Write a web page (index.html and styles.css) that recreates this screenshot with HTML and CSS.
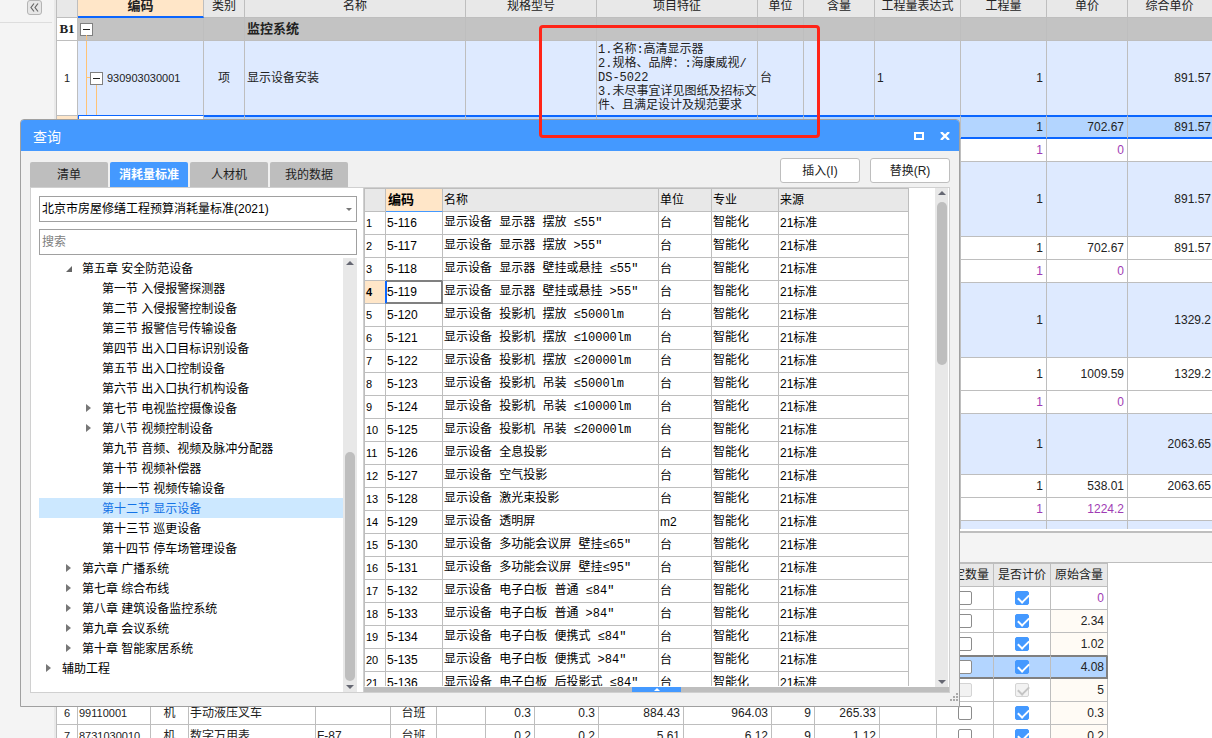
FILE: index.html
```html
<!DOCTYPE html>
<html lang="zh-CN">
<head>
<meta charset="utf-8">
<title>查询</title>
<link rel="stylesheet" href="styles.css">
</head>
<body>
<div class="app">
  <aside class="side">
    <button class="collapse" aria-label="收起">
      <svg width="9" height="9" viewBox="0 0 9 9"><path d="M4 .5 1 4.5l3 4M8 .5 5 4.5l3 4" fill="none" stroke="#666" stroke-width="1.2"/></svg>
    </button>
  </aside>
  <main class="main">
    <section class="upper">
      <table class="grid bill">
        <colgroup><col class="w21"><col class="w126"><col class="w41"><col class="w221"><col class="w131"><col class="w161"><col class="w46"><col class="w71"><col class="w86"><col class="w86"><col class="w81"><col></colgroup>
        <thead>
          <tr><th></th><th class="active">编码</th><th>类别</th><th>名称</th><th>规格型号</th><th>项目特征</th><th>单位</th><th>含量</th><th>工程量表达式</th><th>工程量</th><th>单价</th><th>综合单价</th></tr>
        </thead>
        <tbody>
          <tr class="group"><td class="rn">B1</td><td class="tree-cell"><button class="toggle" aria-label="折叠"></button><i class="stem"></i></td><td></td><td class="title">监控系统</td><td></td><td></td><td></td><td></td><td></td><td></td><td></td><td></td></tr>
          <tr class="item h75 above"><td class="rn">1</td><td class="tree-cell"><i class="line-a"></i><i class="line-b"></i><i class="branch"></i><span class="node"><button class="toggle" aria-label="折叠"></button><span class="code">930903030001</span></span></td><td class="mid">项</td><td>显示设备安装</td><td></td><td class="mono">1.名称:高清显示器<br>2.规格、品牌：:海康威视/<br>DS-5022<br>3.未尽事宜详见图纸及招标文<br>件、且满足设计及规范要求</td><td>台</td><td></td><td>1</td><td class="num">1</td><td></td><td class="num">891.57</td></tr>
          <tr class="sel"><td class="rn"></td><td class="edit"></td><td></td><td></td><td></td><td></td><td></td><td></td><td></td><td class="num">1</td><td class="num">702.67</td><td class="num">891.57</td></tr>
          <tr class="sub"><td></td><td></td><td></td><td></td><td></td><td></td><td></td><td></td><td></td><td class="num">1</td><td class="num">0</td><td></td></tr>
          <tr class="item h75"><td></td><td></td><td></td><td></td><td></td><td></td><td></td><td></td><td></td><td class="num">1</td><td></td><td class="num">891.57</td></tr>
          <tr><td></td><td></td><td></td><td></td><td></td><td></td><td></td><td></td><td></td><td class="num">1</td><td class="num">702.67</td><td class="num">891.57</td></tr>
          <tr class="sub"><td></td><td></td><td></td><td></td><td></td><td></td><td></td><td></td><td></td><td class="num">1</td><td class="num">0</td><td></td></tr>
          <tr class="item h75"><td></td><td></td><td></td><td></td><td></td><td></td><td></td><td></td><td></td><td class="num">1</td><td></td><td class="num">1329.2</td></tr>
          <tr class="h33"><td></td><td></td><td></td><td></td><td></td><td></td><td></td><td></td><td></td><td class="num">1</td><td class="num">1009.59</td><td class="num">1329.2</td></tr>
          <tr class="sub"><td></td><td></td><td></td><td></td><td></td><td></td><td></td><td></td><td></td><td class="num">1</td><td class="num">0</td><td></td></tr>
          <tr class="item h61"><td></td><td></td><td></td><td></td><td></td><td></td><td></td><td></td><td></td><td class="num">1</td><td></td><td class="num">2063.65</td></tr>
          <tr><td></td><td></td><td></td><td></td><td></td><td></td><td></td><td></td><td></td><td class="num">1</td><td class="num">538.01</td><td class="num">2063.65</td></tr>
          <tr class="sub"><td></td><td></td><td></td><td></td><td></td><td></td><td></td><td></td><td></td><td class="num">1</td><td class="num">1224.2</td><td></td></tr>
          <tr class="item h8"><td></td><td></td><td></td><td></td><td></td><td></td><td></td><td></td><td></td><td></td><td></td><td></td></tr>
        </tbody>
      </table>
    </section>
    <div class="splitter"></div>
    <section class="lower">
      <table class="grid res">
        <colgroup><col class="w21"><col class="w73"><col class="w38"><col class="w127"><col class="w75"><col class="w46"><col class="w49"><col class="w49"><col class="w64"><col class="w85"><col class="w88"><col class="w43"><col class="w65"><col class="w57"><col class="w57"><col class="w57"><col class="w57"></colgroup>
        <thead>
          <tr><th></th><th></th><th></th><th></th><th></th><th></th><th></th><th></th><th></th><th></th><th></th><th></th><th></th><th></th><th>锁定数量</th><th>是否计价</th><th>原始含量</th></tr>
        </thead>
        <tbody>
          <tr class="first"><td colspan="14"></td><td class="mid"><input type="checkbox" aria-label="锁定数量"></td><td class="mid"><input type="checkbox" checked aria-label="是否计价"></td><td class="num purple">0</td></tr>
          <tr><td colspan="14"></td><td class="mid"><input type="checkbox" aria-label="锁定数量"></td><td class="mid"><input type="checkbox" checked aria-label="是否计价"></td><td class="num">2.34</td></tr>
          <tr class="before-cur"><td colspan="14"></td><td class="mid"><input type="checkbox" aria-label="锁定数量"></td><td class="mid"><input type="checkbox" checked aria-label="是否计价"></td><td class="num">1.02</td></tr>
          <tr class="cur"><td colspan="14"></td><td class="mid"><input type="checkbox" aria-label="锁定数量"></td><td class="mid"><input type="checkbox" checked aria-label="是否计价"></td><td class="num">4.08</td></tr>
          <tr><td colspan="14"></td><td class="mid"><input type="checkbox" disabled aria-label="锁定数量"></td><td class="mid"><input type="checkbox" checked disabled aria-label="是否计价"></td><td class="num">5</td></tr>
          <tr><td class="rn">6</td><td class="code">99110001</td><td class="mid">机</td><td>手动液压叉车</td><td></td><td class="mid">台班</td><td></td><td class="num">0.3</td><td class="num">0.3</td><td class="num">884.43</td><td class="num">964.03</td><td class="num">9</td><td class="num">265.33</td><td></td><td class="mid"><input type="checkbox" aria-label="锁定数量"></td><td class="mid"><input type="checkbox" checked aria-label="是否计价"></td><td class="num">0.3</td></tr>
          <tr><td class="rn">7</td><td class="code">8731030010</td><td class="mid">机</td><td>数字万用表</td><td>F-87</td><td class="mid">台班</td><td></td><td class="num">0.2</td><td class="num">0.2</td><td class="num">5.61</td><td class="num">6.12</td><td class="num">9</td><td class="num">1.12</td><td></td><td class="mid"><input type="checkbox" aria-label="锁定数量"></td><td class="mid"><input type="checkbox" checked aria-label="是否计价"></td><td class="num">0.2</td></tr>
        </tbody>
      </table>
    </section>
  </main>

  <div class="dialog" role="dialog" aria-labelledby="dlg-title">
    <header class="titlebar">
      <h1 id="dlg-title">查询</h1>
      <button aria-label="最大化"><svg width="10" height="8" viewBox="0 0 10 8"><path d="M1 1h8v6H1z" fill="none" stroke="#fff" stroke-width="2"/></svg></button>
      <button aria-label="关闭"><svg width="10" height="8" viewBox="0 0 10 8"><path d="M1 0l8 8M9 0 1 8" fill="none" stroke="#fff" stroke-width="2.4"/></svg></button>
    </header>
    <div class="toolbar">
      <nav class="tabs">
        <button>清单</button><button class="on">消耗量标准</button><button>人材机</button><button>我的数据</button>
      </nav>
      <div class="actions"><button>插入(I)</button><button>替换(R)</button></div>
    </div>
    <div class="panes">
      <div class="left">
        <div class="select"><select aria-label="标准"><option>北京市房屋修缮工程预算消耗量标准(2021)</option></select></div>
        <input class="search" type="text" placeholder="搜索" aria-label="搜索">
        <div class="tree-wrap">
          <ul class="tree">
            <li class="l2 open">第五章 安全防范设备</li>
            <li class="l3">第一节 入侵报警探测器</li>
            <li class="l3">第二节 入侵报警控制设备</li>
            <li class="l3">第三节 报警信号传输设备</li>
            <li class="l3">第四节 出入口目标识别设备</li>
            <li class="l3">第五节 出入口控制设备</li>
            <li class="l3">第六节 出入口执行机构设备</li>
            <li class="l3 shut">第七节 电视监控摄像设备</li>
            <li class="l3 shut">第八节 视频控制设备</li>
            <li class="l3">第九节 音频、视频及脉冲分配器</li>
            <li class="l3">第十节 视频补偿器</li>
            <li class="l3">第十一节 视频传输设备</li>
            <li class="l3 picked">第十二节 显示设备</li>
            <li class="l3">第十三节 巡更设备</li>
            <li class="l3">第十四节 停车场管理设备</li>
            <li class="l2 shut">第六章 广播系统</li>
            <li class="l2 shut">第七章 综合布线</li>
            <li class="l2 shut">第八章 建筑设备监控系统</li>
            <li class="l2 shut">第九章 会议系统</li>
            <li class="l2 shut">第十章 智能家居系统</li>
            <li class="l1 shut">辅助工程</li>
          </ul>
          <div class="scroll tree-scroll"><i class="up"></i><i class="thumb"></i><i class="down"></i></div>
        </div>
      </div>
      <div class="right">
        <div class="view">
          <div class="clip">
            <table class="grid quota">
              <colgroup><col class="w21"><col class="w57"><col class="w216"><col class="w53"><col class="w67"><col class="w130"></colgroup>
              <thead><tr><th></th><th class="active">编码</th><th>名称</th><th>单位</th><th>专业</th><th>来源</th></tr></thead>
              <tbody>
                <tr><td>1</td><td>5-116</td><td>显示设备 显示器 摆放 ≤55″</td><td>台</td><td>智能化</td><td>21标准</td></tr>
                <tr><td>2</td><td>5-117</td><td>显示设备 显示器 摆放 &gt;55″</td><td>台</td><td>智能化</td><td>21标准</td></tr>
                <tr class="before-cursor"><td>3</td><td>5-118</td><td>显示设备 显示器 壁挂或悬挂 ≤55″</td><td>台</td><td>智能化</td><td>21标准</td></tr>
                <tr class="cursor"><td>4</td><td>5-119</td><td>显示设备 显示器 壁挂或悬挂 &gt;55″</td><td>台</td><td>智能化</td><td>21标准</td></tr>
                <tr><td>5</td><td>5-120</td><td>显示设备 投影机 摆放 ≤5000lm</td><td>台</td><td>智能化</td><td>21标准</td></tr>
                <tr><td>6</td><td>5-121</td><td>显示设备 投影机 摆放 ≤10000lm</td><td>台</td><td>智能化</td><td>21标准</td></tr>
                <tr><td>7</td><td>5-122</td><td>显示设备 投影机 摆放 ≤20000lm</td><td>台</td><td>智能化</td><td>21标准</td></tr>
                <tr><td>8</td><td>5-123</td><td>显示设备 投影机 吊装 ≤5000lm</td><td>台</td><td>智能化</td><td>21标准</td></tr>
                <tr><td>9</td><td>5-124</td><td>显示设备 投影机 吊装 ≤10000lm</td><td>台</td><td>智能化</td><td>21标准</td></tr>
                <tr><td>10</td><td>5-125</td><td>显示设备 投影机 吊装 ≤20000lm</td><td>台</td><td>智能化</td><td>21标准</td></tr>
                <tr><td>11</td><td>5-126</td><td>显示设备 全息投影</td><td>台</td><td>智能化</td><td>21标准</td></tr>
                <tr><td>12</td><td>5-127</td><td>显示设备 空气投影</td><td>台</td><td>智能化</td><td>21标准</td></tr>
                <tr><td>13</td><td>5-128</td><td>显示设备 激光束投影</td><td>台</td><td>智能化</td><td>21标准</td></tr>
                <tr><td>14</td><td>5-129</td><td>显示设备 透明屏</td><td>m2</td><td>智能化</td><td>21标准</td></tr>
                <tr><td>15</td><td>5-130</td><td>显示设备 多功能会议屏 壁挂≤65″</td><td>台</td><td>智能化</td><td>21标准</td></tr>
                <tr><td>16</td><td>5-131</td><td>显示设备 多功能会议屏 壁挂≤95″</td><td>台</td><td>智能化</td><td>21标准</td></tr>
                <tr><td>17</td><td>5-132</td><td>显示设备 电子白板 普通 ≤84″</td><td>台</td><td>智能化</td><td>21标准</td></tr>
                <tr><td>18</td><td>5-133</td><td>显示设备 电子白板 普通 &gt;84″</td><td>台</td><td>智能化</td><td>21标准</td></tr>
                <tr><td>19</td><td>5-134</td><td>显示设备 电子白板 便携式 ≤84″</td><td>台</td><td>智能化</td><td>21标准</td></tr>
                <tr><td>20</td><td>5-135</td><td>显示设备 电子白板 便携式 &gt;84″</td><td>台</td><td>智能化</td><td>21标准</td></tr>
                <tr><td>21</td><td>5-136</td><td>显示设备 电子白板 后投影式 ≤84″</td><td>台</td><td>智能化</td><td>21标准</td></tr>
              </tbody>
            </table>
          </div>
          <div class="scroll grid-scroll"><i class="up"></i><i class="thumb"></i><i class="down"></i></div>
        </div>
        <div class="drawer"><button aria-label="展开"><i></i></button></div>
      </div>
    </div>
    <footer class="status">
      <svg width="10" height="10" viewBox="0 0 10 10" fill="#aaa"><path d="M7 0h2v2H7zM4 3h2v2H4zM7 3h2v2H7zM1 6h2v2H1zM4 6h2v2H4zM7 6h2v2H7z"/></svg>
    </footer>
  </div>
  <div class="callout"></div>
</div>
</body>
</html>
```
FILE: styles.css
```css
* { box-sizing: border-box; }
html, body { height: 100%; }
body {
  margin: 0;
  overflow: hidden;
  font: 12px/14px "Liberation Sans", "Noto Sans CJK SC", sans-serif;
  color: #222;
  background: #fff;
}
button, input, select { font: inherit; color: inherit; margin: 0; padding: 0; }
i { display: block; }

.app { position: relative; display: flex; height: 100%; overflow: hidden; }

/* left rail */
.side {
  flex: none;
  width: 56px;
  background: #f4f4f4;
  border-right: 2px solid #e9e9e9;
}
.collapse {
  display: flex;
  align-items: center;
  justify-content: center;
  width: 15px;
  height: 15px;
  margin: 0 0 7px 27px;
  background: #e6e6e6;
  border: 1px solid #b4b4b4;
  border-radius: 3px;
}
.side::after { content: ""; display: block; width: 52px; border-top: 1px solid #ddd; }

.main { flex: 1; min-width: 0; display: flex; flex-direction: column; border-left: 1px solid #bebebe; }

/* data grids */
.grid { table-layout: fixed; border-collapse: separate; border-spacing: 0; }
.grid th, .grid td {
  height: 23px;
  padding: 0 3px 0 1px;
  border-right: 1px solid #bebebe;
  border-bottom: 1px solid #bebebe;
  overflow: hidden;
  white-space: nowrap;
  text-align: left;
}
.grid th { background: #e8e8e8; font-weight: normal; text-align: center; padding: 0; }
.grid th.active { background: #ffe6c8; font-size: 13px; font-weight: bold; }
.grid .num { text-align: right; }
.grid .mid { text-align: center; padding: 0; }
.grid .rn { text-align: center; padding: 0; font-size: 11px; }
.grid .code { font-size: 11px; }
.grid .mono { font-family: "Liberation Mono", "Noto Sans CJK SC", monospace; padding: 0 0 0 1px; }
.w21 { width: 21px; } .w38 { width: 38px; } .w41 { width: 41px; } .w43 { width: 43px; }
.w46 { width: 46px; } .w49 { width: 49px; } .w53 { width: 53px; } .w57 { width: 57px; }
.w64 { width: 64px; } .w65 { width: 65px; } .w67 { width: 67px; } .w71 { width: 71px; }
.w73 { width: 73px; } .w75 { width: 75px; } .w81 { width: 81px; } .w85 { width: 85px; }
.w86 { width: 86px; } .w88 { width: 88px; } .w126 { width: 126px; } .w127 { width: 127px; }
.w130 { width: 130px; } .w131 { width: 131px; } .w161 { width: 161px; }
.w216 { width: 216px; } .w221 { width: 221px; }

.upper { flex: none; overflow: hidden; padding-bottom: 2px; }
.bill { width: 100%; margin-top: -5px; }
.bill td { padding-left: 2px; }
.bill th.active { border-bottom: 2px solid #0b66ff; }
.bill th:last-child, .bill td:last-child { border-right: 0; padding-right: 1px; }
.bill .item td { background: #deeaff; }
.bill .item td:first-child { background: #fff; }
.bill .h75 td { height: 75px; }
.bill .h61 td { height: 61px; }
.bill .h33 td { height: 33px; }
.bill .h8 td { height: 8px; border-bottom: 0; }
.bill .sub td { color: #a03cb4; }
.bill .group td { background: #c3c3c3; }
.bill .group .rn { background: #fff; font: bold 13px/14px "Liberation Serif", serif; }
.bill .group .title { font-size: 13px; font-weight: bold; }
.bill .above td:not(:first-child) { border-bottom-color: #0b66ff; }
.bill .sel td { background: #b3d5ff; border-bottom-color: #0b66ff; box-shadow: inset 0 1px #0b66ff, inset 0 -1px #0b66ff; }
.bill .sel .rn { background: #ffe6c8; box-shadow: none; }
.bill .sel .edit { background: #fff; box-shadow: inset 1px 0 #0b66ff; }

.bill .tree-cell { position: relative; overflow: visible; }
.toggle { display: block; position: relative; width: 13px; height: 13px; background: #fff; border: 1px solid #808080; }
.toggle::after { content: ""; position: absolute; left: 2px; right: 2px; top: 5px; height: 1px; background: #222; }
.node { display: flex; align-items: center; gap: 4px; padding-left: 10px; }
.stem, .line-a, .line-b { position: absolute; width: 1px; background: #ffc376; }
.stem { left: 8px; top: 17px; bottom: 0; }
.line-a { left: 8px; top: 0; bottom: 0; }
.line-b { left: 18px; top: 43px; bottom: 0; }
.branch { position: absolute; left: 8px; top: 36px; width: 4px; height: 1px; background: #ffc376; }

.splitter { flex: none; height: 32px; background: #f4f4f4; border-top: 2px solid #bebebe; border-bottom: 1px solid #bebebe; }

.lower { flex: 1; min-height: 0; overflow: hidden; }
.res { width: 1051px; }
.res th { border-top: 1px solid #bebebe; height: 24px; }
.res tbody td:last-child { background: #fffbf5; }
.res tbody .first td:last-child { background: #fff; }
.res .purple { color: #a03cb4; }
.res .before-cur td { border-bottom-color: #808080; }
.res tbody .cur td, .res tbody .cur td:last-child { background: #b3d5ff; border-bottom-color: #808080; box-shadow: inset 0 1px #808080, inset 0 -1px #808080; }
.res tbody .cur td:last-child { border-right-color: #808080; box-shadow: inset 0 1px #808080, inset -1px -1px #808080; }
input[type="checkbox"] {
  appearance: none;
  display: block;
  position: relative;
  width: 14px;
  height: 14px;
  margin: 0 auto;
  background: #fff;
  border: 1px solid #8c8c8c;
  border-radius: 2px;
}
input[type="checkbox"]:checked { background: #4499ff; border-color: #4499ff; }
input[type="checkbox"]:checked::after {
  content: "";
  position: absolute;
  left: 4px;
  top: 0;
  width: 5px;
  height: 9px;
  border: solid #fff;
  border-width: 0 2px 2px 0;
  transform: rotate(45deg);
}
input[type="checkbox"]:disabled { background: #f2f2f2; border-color: #d4d4d4; }
input[type="checkbox"]:disabled::after { border-color: #c4c4c4; }

/* floating window */
.dialog {
  position: absolute;
  left: 20px;
  top: 119px;
  width: 940px;
  display: flex;
  flex-direction: column;
  background: #f1f1f1;
  border: 1px solid #a0a0a0;
  border-radius: 4px 4px 0 0;
}
.titlebar {
  display: flex;
  align-items: center;
  gap: 10px;
  height: 31px;
  padding: 0 6px 0 12px;
  background: #4499ff;
  border-radius: 3px 3px 0 0;
  color: #fff;
}
.titlebar h1 { flex: 1; margin: 0; padding-top: 3px; font-size: 14px; line-height: 20px; font-weight: normal; }
.titlebar button { display: flex; justify-content: center; width: 16px; background: none; border: 0; }

.toolbar { display: flex; justify-content: space-between; align-items: flex-end; padding: 7px 9px 0; }
.tabs { display: flex; gap: 2px; }
.tabs button { width: 78px; height: 25px; background: #bebebe; border: 0; border-radius: 2px 2px 0 0; }
.tabs .on { background: #4499ff; color: #fff; font-weight: bold; }
.actions { display: flex; gap: 10px; padding-bottom: 4px; }
.actions button { width: 80px; height: 25px; background: #fff; border: 1px solid #bebebe; border-radius: 3px; }

.panes { display: flex; margin: 0 9px; border: 1px solid #d0d0d0; background: #fff; color: #000; }
.left { flex: none; width: 333px; display: flex; flex-direction: column; padding: 8px 6px 0 8px; border-right: 1px solid #d0d0d0; }
.select { position: relative; margin-bottom: 7px; }
.select::after { content: ""; position: absolute; right: 5px; top: 12px; border: solid transparent; border-width: 3px 3px 0; border-top-color: #777; }
.select select, .search { display: block; width: 100%; height: 26px; padding: 0 2px; background: #fff; border: 1px solid #a0a0a0; border-radius: 0; }
.select select { appearance: none; }
.search { margin-bottom: 3px; }
.search::placeholder { color: #808080; opacity: 1; }
.tree-wrap { display: flex; }
.tree { flex: 1; margin: 0; padding: 0 0 14px; list-style: none; }
.tree li { position: relative; height: 20px; line-height: 22px; }
.tree .l1 { padding-left: 23px; --arrow: 7px; }
.tree .l2 { padding-left: 43px; --arrow: 27px; }
.tree .l3 { padding-left: 63px; --arrow: 47px; }
.tree .picked { background: #cce8ff; color: #1473e6; }
.tree .shut::before, .tree .open::before { content: ""; position: absolute; left: var(--arrow); border: solid transparent; }
.tree .shut::before { top: 6px; border-width: 4px 0 4px 5px; border-left-color: #777; }
.tree .open::before { top: 8px; border-width: 0 0 6px 6px; border-bottom-color: #666; }

.scroll { flex: none; display: flex; flex-direction: column; align-items: center; background: #e8e8e8; padding: 3px 0; }
.scroll .up, .scroll .down { border: solid transparent; }
.scroll .up { border-width: 0 4px 4px; border-bottom-color: #666873; }
.scroll .down { border-width: 4px 4px 0; border-top-color: #666873; }
.scroll .thumb { width: 10px; background: #bebebe; border-radius: 5px; margin-bottom: auto; }
.tree-scroll { width: 14px; }
.tree-scroll .thumb { height: 229px; margin-top: auto; margin-bottom: 4px; }
.grid-scroll .thumb { height: 163px; margin-top: 7px; }
.grid-scroll { width: 13px; }

.right { flex: 1; min-width: 0; display: flex; flex-direction: column; }
.view { flex: 1 1 0; min-height: 0; display: flex; justify-content: space-between; padding-right: 1px; }
.clip { overflow: hidden; border-left: 1px solid #bebebe; border-bottom: 1px solid #fff; }
.quota { width: 544px; }
.quota th { text-align: left; padding: 0 1px; height: 24px; border-top: 1px solid #bebebe; }
.quota th.active { border-bottom-color: #4499ff; padding-left: 2px; }
.quota td { font-family: "Liberation Mono", "Noto Sans CJK SC", monospace; }
.quota td:first-child { font: 11px/14px "Liberation Sans", sans-serif; }
.quota td:nth-child(2), .quota td:nth-child(4), .quota td:last-child { font-family: "Liberation Sans", "Noto Sans CJK SC", sans-serif; }
.quota .before-cursor td:nth-child(2) { border-bottom-color: #808080; }
.quota .cursor td:first-child { background: #ffe6c8; font-weight: bold; border-right-color: #0b66ff; }
.quota .cursor td:nth-child(2) { border-color: #808080; box-shadow: inset 1px 0 #0b66ff, inset -1px -1px #808080, inset 0 1px #808080; }
.drawer { height: 5px; background: #bebebe; }
.drawer button { display: flex; align-items: center; justify-content: center; width: 49px; height: 5px; margin: 0 auto; border: 0; background: #4499ff; }
.drawer i { border: solid transparent; border-width: 0 3px 3px; border-bottom-color: #fff; }

.status { display: flex; justify-content: flex-end; height: 13px; }

/* highlight frame over the feature column */
.callout {
  position: absolute;
  left: 539px;
  top: 25px;
  width: 281px;
  height: 113px;
  border: 3px solid #ff2418;
  border-radius: 4px;
}
```
